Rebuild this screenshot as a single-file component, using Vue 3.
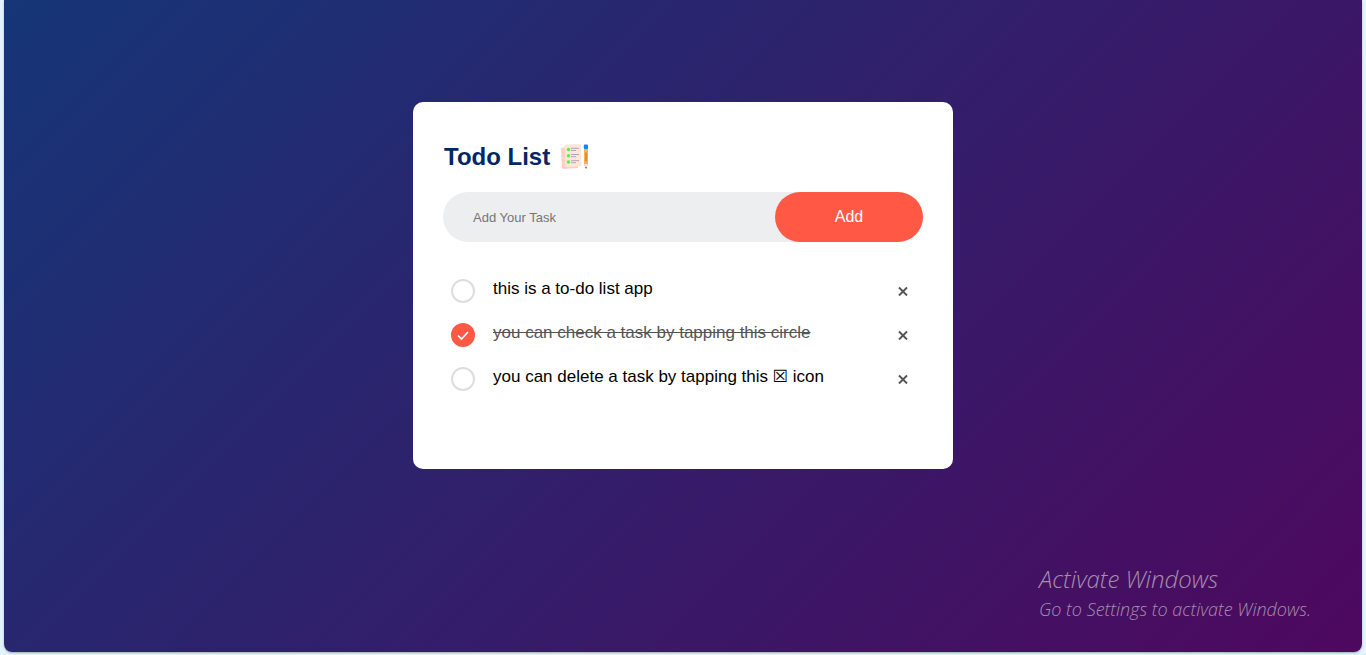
<script setup>
import { ref } from 'vue'

const draft = ref('')
const tasks = ref([
  { id: 1, text: 'this is a to-do list app', done: false },
  { id: 2, text: 'you can check a task by tapping this circle', done: true },
  { id: 3, text: 'you can delete a task by tapping this ☒ icon', done: false }
])

function addTask() {
  const text = draft.value.trim()
  if (!text) return
  tasks.value.push({ id: Date.now(), text, done: false })
  draft.value = ''
}

function removeTask(id) {
  tasks.value = tasks.value.filter((task) => task.id !== id)
}
</script>

<template>
  <div class="page">
    <main class="backdrop">
      <section class="card">
        <h1 class="title">
          Todo List
          <svg class="logo" viewBox="0 0 30 28" aria-hidden="true">
            <path d="M1 5 L6 4 L18 24 L18 25 L3 26 Q2 26 2 24 Z" fill="#ffcfc4" />
            <path d="M6 1.500 L20 1 Q21 1 21 2 L21.500 22 Q21.500 23 20 23 L6 24 Q5 24 5 22 L4.500 3 Q4.500 1.500 6 1.500 Z" fill="#ffe6da" />
            <g fill="#51f04d">
              <circle cx="8.500" cy="6.500" r="1.700" />
              <circle cx="8.500" cy="12.700" r="1.700" />
              <circle cx="8.500" cy="19" r="1.700" />
            </g>
            <path d="M11 5.300h8M11 7.500h5M11 11.500h8M11 13.700h5M11 17.700h8M11 19.700h5" stroke="#b5a3b8" />
            <path d="M24 5h4v16l-2 5-2-5z" fill="#ffb347" />
            <path d="M24 21h4l-2 4.500z" fill="#ffe0d8" />
            <path d="M25.400 24h1.200l-.6 2z" fill="#222" />
            <path d="M26 9.500v9" stroke="#a8733c" />
            <rect x="23.800" y="1.500" width="4.200" height="4.500" rx="1" fill="#0c87f5" />
          </svg>
        </h1>
        <form class="entry" @submit.prevent="addTask">
          <input v-model="draft" class="field" type="text" placeholder="Add Your Task" aria-label="Add Your Task" />
          <button class="add" type="submit">Add</button>
        </form>
        <ul class="list">
          <li v-for="task in tasks" :key="task.id" class="item">
            <label class="task">
              <span class="tick">
                <input v-model="task.done" class="box" type="checkbox" />
                <svg v-if="task.done" class="check" viewBox="0 0 24 24" aria-hidden="true">
                  <path d="M7 12.500l3.500 3.500L17 9" fill="none" stroke="#fff" stroke-width="1.700" />
                </svg>
              </span>
              <span class="text" :class="{ done: task.done }">{{ task.text }}</span>
            </label>
            <button class="remove" type="button" aria-label="Delete task" @click="removeTask(task.id)">
              <svg class="cross" viewBox="0 0 10 10" aria-hidden="true">
                <path d="M1 1.500l8 8M9 1.500l-8 8" stroke="#555" stroke-width="1.900" />
              </svg>
            </button>
          </li>
        </ul>
      </section>
      <aside class="notice">
        <p class="notice-title">Activate Windows</p>
        <p class="notice-text">Go to Settings to activate Windows.</p>
      </aside>
    </main>
  </div>
</template>

<style>
body {
  background: #e3f3fb;
}
</style>

<style scoped>
.page {
  display: flex;
  box-sizing: border-box;
  min-height: 100vh;
  padding: 0 4px 3px;
  font-family: "Liberation Sans", Arial, sans-serif;
}

.backdrop {
  position: relative;
  flex: 1;
  box-sizing: border-box;
  padding: 102px 10px 20px;
  border-radius: 0 0 8px 8px;
  background: linear-gradient(135deg, #153677, #4e085f);
  box-shadow: 0 1px 2px rgba(0, 0, 0, 0.3);
}

.card {
  box-sizing: border-box;
  width: 100%;
  max-width: 540px;
  margin: 0 auto;
  padding: 40px 30px 70px;
  border-radius: 10px;
  background: #fff;
}

.title {
  display: flex;
  align-items: center;
  gap: 10px;
  height: 30px;
  margin: 0 0 20px;
  padding-left: 1px;
  color: #002765;
  font-size: 24px;
  line-height: 30px;
}

.logo {
  width: 30px;
  height: 28px;
}

.entry {
  display: flex;
  margin: 0 0 25px;
  border-radius: 30px;
  background: #edeef0;
}

.field {
  flex: 1;
  min-width: 0;
  padding: 0 0 0 30px;
  border: 0;
  outline: 0;
  background: transparent;
  font: 13px "Liberation Sans", Arial, sans-serif;
}

.field::placeholder {
  color: #757575;
}

.add {
  width: 148px;
  height: 50px;
  padding: 0;
  border: 0;
  border-radius: 40px;
  background: #ff5945;
  color: #fff;
  font: 16px "Liberation Sans", Arial, sans-serif;
  cursor: pointer;
}

.list {
  margin: 0;
  padding: 0;
  list-style: none;
}

.item {
  display: flex;
  align-items: flex-start;
  padding: 12px 8px 8px;
}

.task {
  display: flex;
  flex: 1;
  gap: 18px;
  cursor: pointer;
}

.tick {
  display: grid;
  flex: none;
  width: 24px;
  height: 24px;
}

.box,
.check {
  grid-area: 1 / 1;
  width: 24px;
  height: 24px;
}

.box {
  box-sizing: border-box;
  margin: 0;
  border: 2px solid #dedede;
  border-radius: 50%;
  appearance: none;
}

.box:checked {
  border-color: #ff5945;
  background: #ff5945;
}

.check {
  pointer-events: none;
}

.text {
  color: #000;
  font-family: "Liberation Sans", "DejaVu Sans", sans-serif;
  font-size: 17px;
  line-height: 20px;
}

.done {
  color: #555;
  text-decoration: line-through;
}

.remove {
  display: grid;
  place-items: center;
  width: 24px;
  height: 24px;
  padding: 0;
  border: 0;
  background: transparent;
  cursor: pointer;
}

.cross {
  width: 10px;
  height: 10px;
}

.notice {
  position: absolute;
  right: 51px;
  bottom: 30px;
  color: #a68fad;
  font-family: "Segoe Print", "Open Sans", sans-serif;
  font-style: italic;
  font-weight: 300;
}

.notice p {
  margin: 0;
}

.notice-title {
  font-size: 24px;
  line-height: 34px;
}

.notice-text {
  font-size: 18px;
  line-height: 26px;
}
</style>
